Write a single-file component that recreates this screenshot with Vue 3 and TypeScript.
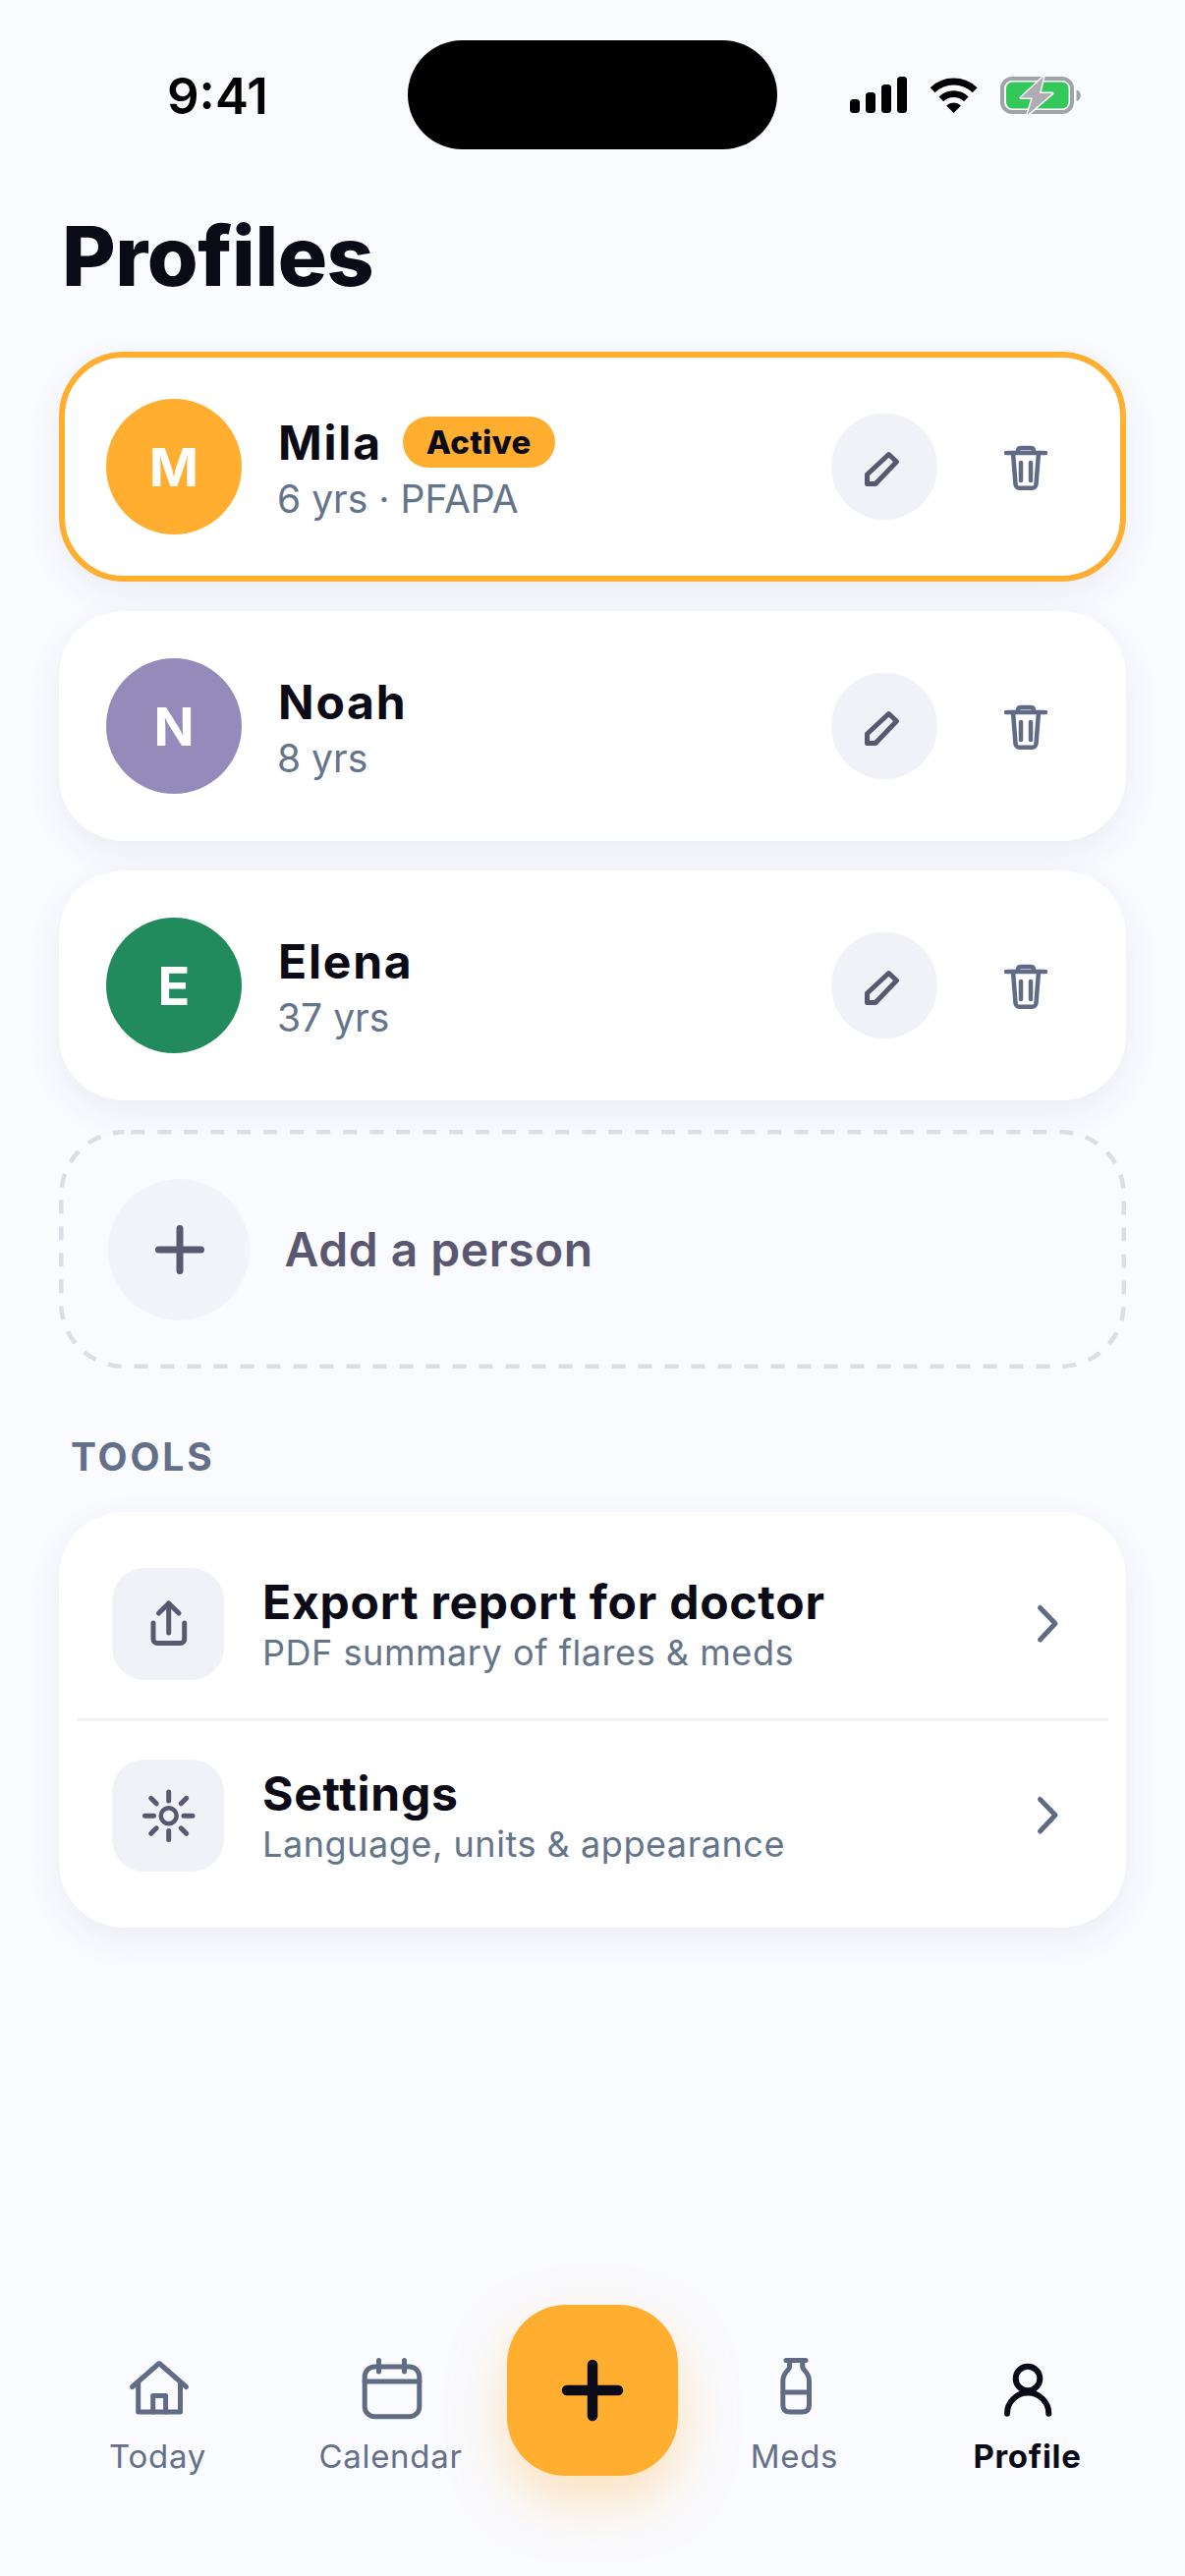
<script setup lang="ts">
interface Person {
  initial: string
  name: string
  detail: string
  color: string
  active?: boolean
}
interface Tool {
  title: string
  subtitle: string
  icon: 'export' | 'settings'
}
interface Tab {
  label: string
  icon: 'home' | 'calendar' | 'meds' | 'profile'
  active?: boolean
}

const people: Person[] = [
  { initial: 'M', name: 'Mila', detail: '6 yrs · PFAPA', color: '#ffae2f', active: true },
  { initial: 'N', name: 'Noah', detail: '8 yrs', color: '#958bbb' },
  { initial: 'E', name: 'Elena', detail: '37 yrs', color: '#218b5e' },
]
const tools: Tool[] = [
  { title: 'Export report for doctor', subtitle: 'PDF summary of flares & meds', icon: 'export' },
  { title: 'Settings', subtitle: 'Language, units & appearance', icon: 'settings' },
]
const leftTabs: Tab[] = [
  { label: 'Today', icon: 'home' },
  { label: 'Calendar', icon: 'calendar' },
]
const rightTabs: Tab[] = [
  { label: 'Meds', icon: 'meds' },
  { label: 'Profile', icon: 'profile', active: true },
]
</script>

<template>
  <div class="screen">
    <header class="status">
      <span class="time">9:41</span>
      <div class="island"></div>
      <div class="status-icons">
        <svg width="58" height="37" viewBox="0 0 58 37" fill="#000">
          <rect x="0" y="23" width="10" height="14" rx="3.5" />
          <rect x="16" y="16" width="10" height="21" rx="3.5" />
          <rect x="32" y="8" width="10" height="29" rx="3.5" />
          <rect x="48" y="0" width="10" height="37" rx="3.5" />
        </svg>
        <svg width="49" height="37" viewBox="0 0 49 37" fill="none" stroke="#000">
          <path d="M3.1 13.7A31 31 0 0 1 46.1 13.7" stroke-width="7" />
          <path d="M11.9 22.8A18.3 18.3 0 0 1 37.3 22.8" stroke-width="6.7" />
          <path d="M24.6 37L17.2 29.5A10.5 10.5 0 0 1 32 29.5Z" fill="#000" stroke="none" />
        </svg>
        <svg width="82" height="42" viewBox="0 -2 82 42" fill="none">
          <rect x="2" y="2" width="71" height="34" rx="10" stroke="#a2a3a8" stroke-width="4" />
          <rect x="6" y="5.5" width="63.5" height="27" rx="6.5" fill="#34c759" />
          <path d="M77.5 13.5a6 6 0 0 1 0 11.5z" fill="#a2a3a8" />
          <path d="M44 0L21 21.5H33L27.5 39L53 17H40Z" fill="#aeaeb2" stroke="#fafbff" stroke-width="3" stroke-linejoin="round" paint-order="stroke" />
        </svg>
      </div>
    </header>

    <main class="content">
      <h1 class="title">Profiles</h1>

      <section class="people">
        <article v-for="p in people" :key="p.name" class="card person" :class="{ active: p.active }">
          <div class="avatar" :style="{ background: p.color }">{{ p.initial }}</div>
          <div class="person-text">
            <div class="name-row">
              <span class="name">{{ p.name }}</span>
              <span v-if="p.active" class="badge">Active</span>
            </div>
            <div class="detail">{{ p.detail }}</div>
          </div>
          <div class="actions">
            <button class="act edit" type="button" aria-label="Edit">
              <svg width="48" height="48" viewBox="0 0 48 48" fill="none" stroke="#5a5870" stroke-width="5" stroke-linejoin="round">
                <path d="M6.5 41.5V32L28.5 11.5L36.5 19L15 41.5Z" />
              </svg>
            </button>
            <button class="act" type="button" aria-label="Delete">
              <svg width="60" height="60" viewBox="0 0 60 60" fill="none" stroke="#616b85" stroke-width="4.5" stroke-linecap="round" stroke-linejoin="round">
                <path d="M10 16H50" />
                <path d="M22 15.5V13.5A3 3 0 0 1 25 11H35A3 3 0 0 1 38 13.5V15.5" />
                <path d="M17 16L19.5 48A4 4 0 0 0 23.5 51.8H36.5A4 4 0 0 0 40.5 48L43 16" />
                <path d="M25 26V44M35 26V44" />
              </svg>
            </button>
          </div>
        </article>

        <button class="add" type="button">
          <svg class="add-border" width="1086" height="243" viewBox="0 0 1086 243" fill="none">
            <rect x="2.25" y="2.25" width="1081.5" height="238.5" rx="64" stroke="#dddde6" stroke-width="4.5" stroke-dasharray="14 13" stroke-dashoffset="-7" />
          </svg>
          <span class="add-circle">
            <svg width="60" height="60" viewBox="0 0 60 60" fill="none" stroke="#5a5870" stroke-width="7" stroke-linecap="round">
              <path d="M8.5 30H51.5M30 8.5V51.5" />
            </svg>
          </span>
          <span class="add-label">Add a person</span>
        </button>
      </section>

      <h2 class="section-label">TOOLS</h2>

      <section class="card tools">
        <div v-for="t in tools" :key="t.title" class="tool">
          <div class="tile">
            <svg v-if="t.icon === 'export'" width="72" height="72" viewBox="0 0 72 72" fill="none" stroke="#5a5870" stroke-width="5" stroke-linecap="round" stroke-linejoin="round">
              <path d="M36.7 15V45" />
              <path d="M26.5 25L36.7 15L47 25" />
              <path d="M21 35V51.5A4 4 0 0 0 25 55.5H48.7A4 4 0 0 0 52.7 51.5V35" />
            </svg>
            <svg v-else width="72" height="72" viewBox="0 0 72 72" fill="none" stroke="#5a5870" stroke-width="5" stroke-linecap="round">
              <circle cx="36.7" cy="36.3" r="8" stroke-width="4.5" />
              <path d="M36.7 12V21M36.7 51.5V60.5M12.5 36.3H21.5M52 36.3H61M18.7 18.3L24.2 23.8M49.2 48.8L54.7 54.3M18.7 54.3L24.2 48.8M49.2 23.8L54.7 18.3" />
            </svg>
          </div>
          <div class="tool-text">
            <div class="tool-title">{{ t.title }}</div>
            <div class="tool-sub">{{ t.subtitle }}</div>
          </div>
          <svg class="chev" width="48" height="48" viewBox="0 0 48 48" fill="none" stroke="#5f6b85" stroke-width="5" stroke-linecap="round" stroke-linejoin="round">
            <path d="M14.5 7.5L30 23.5L14.5 40" />
          </svg>
        </div>
      </section>
    </main>

    <nav class="nav">
      <div v-for="tab in leftTabs" :key="tab.label" class="tab">
        <svg v-if="tab.icon === 'home'" width="72" height="72" viewBox="0 0 72 72" fill="none" stroke="#616b85" stroke-width="5" stroke-linecap="round" stroke-linejoin="round">
          <path d="M9.5 35.5L37 11.5L64.5 35.5" />
          <path d="M15.7 31V61H58.5V31" />
          <path d="M30.7 61V44.4H43.6V61" />
        </svg>
        <svg v-else width="72" height="72" viewBox="0 0 72 72" fill="none" stroke="#616b85" stroke-width="5" stroke-linecap="round">
          <rect x="9.2" y="15" width="55.6" height="50.7" rx="10" />
          <path d="M9 30H65M23.5 8.5V20M49.5 8.5V20" />
        </svg>
        <span class="tab-label">{{ tab.label }}</span>
      </div>

      <button class="fab" type="button" aria-label="Add">
        <svg width="72" height="72" viewBox="0 0 72 72" fill="none" stroke="#0b0b18" stroke-width="10.5" stroke-linecap="round">
          <path d="M10 36H62M36 10V62" />
        </svg>
      </button>

      <div v-for="tab in rightTabs" :key="tab.label" class="tab" :class="{ current: tab.active }">
        <svg v-if="tab.icon === 'meds'" width="72" height="72" viewBox="0 0 72 72" fill="none" stroke="#616b85" stroke-width="5" stroke-linecap="round" stroke-linejoin="round">
          <path d="M27 8.5H47" />
          <path d="M30.5 9V15.5C30.5 18 23.8 21 23.8 29V54Q23.8 61 30.8 61H43.5Q50.5 61 50.5 54V29C50.5 21 43.8 18 43.8 15.5V9" />
          <path d="M24 41H50" />
        </svg>
        <svg v-else width="72" height="72" viewBox="0 0 72 72" fill="none" stroke="#0b0b18" stroke-width="6" stroke-linecap="round">
          <circle cx="36" cy="27" r="12.3" />
          <path d="M15 62.7A21 21 0 0 1 57.3 62.7" />
        </svg>
        <span class="tab-label">{{ tab.label }}</span>
      </div>
    </nav>
  </div>
</template>

<style>
html,
body {
  margin: 0;
  background: #fafbff;
}
</style>

<style scoped>
.screen {
  width: 1206px;
  height: 2622px;
  background: #fafbff;
  display: flex;
  flex-direction: column;
  font-family: Inter, "Noto Sans", sans-serif;
  color: #0b0b18;
  overflow: hidden;
}
.status {
  display: flex;
  align-items: center;
  padding: 41px 0 0 170px;
}
.time {
  width: 245px;
  padding-top: 3px;
  font-size: 51px;
  font-weight: 600;
  line-height: 108px;
  color: #000;
}
.island {
  width: 376px;
  height: 111px;
  border-radius: 56px;
  background: #000;
}
.status-icons {
  display: flex;
  align-items: center;
  gap: 23px;
  margin-left: 74px;
}
.content {
  flex: 1;
  padding: 0 60px;
}
.title {
  margin: 58px 0 46px 3px;
  font-size: 84px;
  line-height: 102px;
  font-weight: 800;
  letter-spacing: -0.5px;
}
.people {
  display: flex;
  flex-direction: column;
  gap: 30px;
}
.card {
  background: #fff;
  border-radius: 66px;
  box-shadow: 0 12px 36px rgba(50, 60, 110, 0.07);
}
.person {
  display: flex;
  align-items: center;
  gap: 36px;
  padding: 42px;
  border: 6px solid transparent;
  box-sizing: border-box;
  height: 234px;
}
.person.active {
  border-color: #ffae2f;
  background-clip: padding-box;
}
.avatar {
  flex: none;
  width: 138px;
  height: 138px;
  border-radius: 50%;
  display: flex;
  align-items: center;
  justify-content: center;
  color: #fff;
  font-size: 54px;
  font-weight: 700;
}
.person-text {
  flex: 1;
  min-width: 0;
}
.name-row {
  display: flex;
  align-items: center;
  gap: 21px;
  height: 60px;
  padding-left: 1px;
}
.name {
  font-size: 48px;
  font-weight: 700;
  letter-spacing: 1.8px;
}
.badge {
  height: 52px;
  padding: 0 24px;
  border-radius: 26px;
  background: #ffae2f;
  font-size: 33px;
  font-weight: 800;
  line-height: 52px;
  letter-spacing: 0.2px;
}
.detail {
  margin-top: 6px;
  font-size: 39px;
  line-height: 44px;
  color: #64748b;
}
.actions {
  display: flex;
  gap: 36px;
}
.act {
  width: 108px;
  height: 108px;
  padding: 0;
  border: none;
  border-radius: 50%;
  background: transparent;
  display: flex;
  align-items: center;
  justify-content: center;
}
.act.edit {
  background: #f1f2f8;
}
.add {
  position: relative;
  display: flex;
  align-items: center;
  gap: 36px;
  box-sizing: border-box;
  width: 100%;
  height: 243px;
  padding: 0 49.5px;
  border: none;
  background: transparent;
  font-family: inherit;
}
.add-border {
  position: absolute;
  left: 0;
  top: 0;
}
.add-circle {
  flex: none;
  width: 144px;
  height: 144px;
  border-radius: 50%;
  background: #f3f4f9;
  display: flex;
  align-items: center;
  justify-content: center;
  padding-left: 2px;
  box-sizing: border-box;
}
.add-label {
  font-size: 48px;
  font-weight: 600;
  letter-spacing: 0.5px;
  color: #5a5870;
}
.section-label {
  margin: 54px 0 0 12px;
  height: 92px;
  font-size: 39px;
  line-height: 72px;
  font-weight: 700;
  letter-spacing: 2.8px;
  color: #64708a;
}
.tools {
  padding: 18px;
}
.tool {
  display: flex;
  align-items: center;
  gap: 39px;
  padding: 39px 0 39px 36px;
}
.tool + .tool {
  border-top: 3px solid #f1f2f7;
}
.tile {
  flex: none;
  width: 114px;
  height: 114px;
  border-radius: 33px;
  background: #f1f2f8;
  display: flex;
  align-items: center;
  justify-content: center;
}
.tool-text {
  flex: 1;
  min-width: 0;
  padding-top: 3px;
}
.tool-title {
  font-size: 48px;
  line-height: 56px;
  font-weight: 700;
  letter-spacing: 0.75px;
}
.tool-sub {
  font-size: 36px;
  line-height: 47px;
  letter-spacing: 0.55px;
  color: #64748b;
}
.chev {
  flex: none;
  margin-right: 36px;
}
.nav {
  display: flex;
  align-items: flex-start;
  height: 174px;
  margin-bottom: 102px;
  padding: 0 42px;
}
.tab {
  flex: 1;
  display: flex;
  flex-direction: column;
  align-items: center;
  padding-top: 48px;
}
.tab-label {
  margin-top: 13px;
  font-size: 33px;
  line-height: 42px;
  letter-spacing: 0.7px;
  color: #64708a;
}
.tab.current .tab-label {
  color: #0b0b18;
  font-weight: 700;
}
.fab {
  flex: none;
  width: 174px;
  height: 174px;
  padding: 0;
  border: none;
  border-radius: 60px;
  background: #ffae2f;
  box-shadow: 0 24px 60px rgba(255, 174, 47, 0.34);
  display: flex;
  align-items: center;
  justify-content: center;
}
</style>
